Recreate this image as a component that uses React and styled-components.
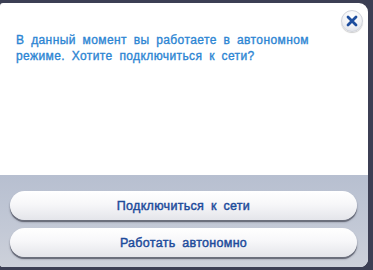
import React from "react";
import styled, { createGlobalStyle } from "styled-components";

const Global = createGlobalStyle`
  html, body { margin: 0; padding: 0; background: #3c3f54; }
  body { width: 373px; height: 270px; overflow: hidden; font-family: "Liberation Sans", Arial, sans-serif; }
`;

const Screen = styled.div`
  width: 373px;
  height: 270px;
  padding: 3px 5px 3px 0;
  box-sizing: border-box;
  display: flex;
`;

const Dialog = styled.div`
  flex: 1;
  display: flex;
  flex-direction: column;
  border-radius: 3px 9px 8px 3px;
  overflow: hidden;
  background: #fff;
`;

const Body = styled.div`
  position: relative;
  flex: 0 0 172px;
  padding: 29px 40px 0 16px;
  box-sizing: border-box;
`;

const Message = styled.p`
  margin: 0;
  color: #2c85d3;
  font-size: 12px;
  line-height: 16px;
  letter-spacing: 0.4px;
  word-spacing: 3px;
  -webkit-text-stroke: 0.35px #2c85d3;
`;

const Close = styled.button`
  position: absolute;
  top: 7px;
  right: 5px;
  width: 22px;
  height: 22px;
  border-radius: 50%;
  border: 1px solid #cfd2da;
  padding: 0;
  background: radial-gradient(circle at 50% 30%, #ffffff 0%, #f1f2f5 55%, #d8dbe2 100%);
  box-shadow: 0 1px 1px rgba(0,0,0,0.2);
  display: flex;
  align-items: center;
  justify-content: center;
`;

const Footer = styled.div`
  flex: 1;
  background: linear-gradient(180deg, #b7bfd0 0%, #c3c9d6 60%, #cdd1da 100%);
  display: flex;
  flex-direction: column;
  gap: 8px;
  padding: 16px 11px 0 10px;
`;

const Btn = styled.button`
  height: 29px;
  border: none;
  border-radius: 15px;
  background: linear-gradient(180deg, #ffffff 0%, #f7f7f9 45%, #e4e5ea 100%);
  box-shadow: 0 2px 0 #6b6f7c, 0 2px 2px rgba(40,40,60,0.5);
  color: #1d4b9b;
  font-family: "Liberation Sans", Arial, sans-serif;
  font-size: 12.5px;
  letter-spacing: 0.3px;
  word-spacing: 3px;
  -webkit-text-stroke: 0.45px #1d4b9b;
  padding: 0;
`;

export default function App() {
  return (
    <>
      <Global />
      <Screen>
        <Dialog>
          <Body>
            <Message>
              В данный момент вы работаете в автономном режиме. Хотите подключиться к сети?
            </Message>
            <Close aria-label="close">
              <svg width="12" height="12" viewBox="0 0 12 12">
                <path d="M2 2 L10 10 M10 2 L2 10" stroke="#1e4e9e" strokeWidth="2.8" strokeLinecap="round" />
              </svg>
            </Close>
          </Body>
          <Footer>
            <Btn>Подключиться к сети</Btn>
            <Btn>Работать автономно</Btn>
          </Footer>
        </Dialog>
      </Screen>
    </>
  );
}
